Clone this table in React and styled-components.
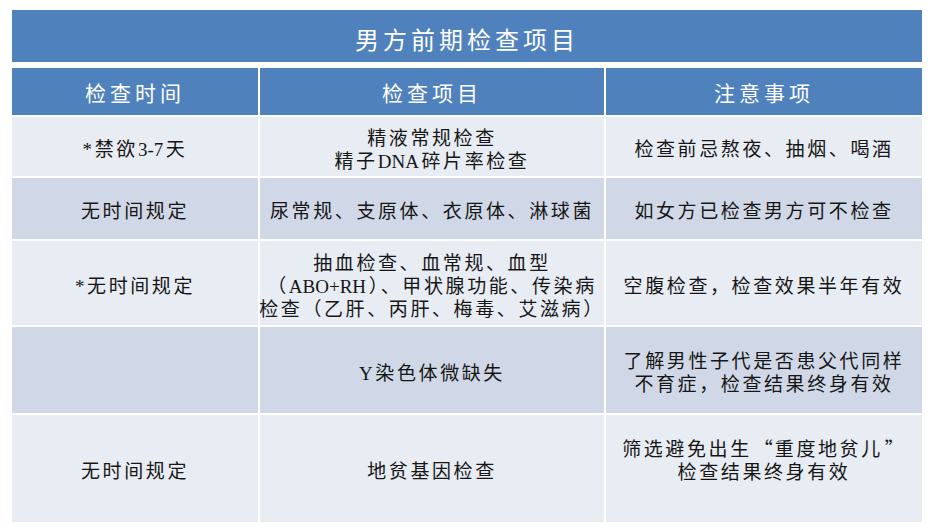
import React from "react";
import styled, { createGlobalStyle } from "styled-components";

const GlobalStyle = createGlobalStyle`
  html, body {
    margin: 0;
    padding: 0;
    background: #ffffff;
  }
  body {
    font-family: "Liberation Serif", "Noto Sans CJK SC", serif;
  }
`;

const Page = styled.div`
  width: 935px;
  height: 525px;
  padding: 10px 13px 0 12px;
  box-sizing: border-box;
  overflow: hidden;
`;

const Grid = styled.div`
  display: grid;
  grid-template-columns: 246px 344px 316px;
  grid-template-rows: 54px 49px 59px 61px 84px 86px 107px;
  column-gap: 2px;
  row-gap: 2px;
  background: #ffffff;
`;

const Title = styled.div`
  grid-column: 1 / -1;
  background: #4f81bd;
  color: #ffffff;
  font-size: 24px;
  letter-spacing: 4px;
  display: flex;
  align-items: center;
  justify-content: center;
  padding-top: 4px;
  margin-bottom: 2px;
`;

const Head = styled.div`
  background: #4f81bd;
  color: #ffffff;
  font-size: 21px;
  letter-spacing: 4px;
  display: flex;
  align-items: center;
  justify-content: center;
  margin-top: 2px;
`;

const Cell = styled.div`
  background: ${(p) => (p.$dark ? "#d0d8e7" : "#e8ecf3")};
  color: #161616;
  font-size: 19px;
  line-height: 23px;
  letter-spacing: 2.6px;
  display: flex;
  align-items: center;
  justify-content: center;
  text-align: center;
  white-space: nowrap;
  padding-top: 6px;
  padding-bottom: ${(p) => p.$lift || 0}px;
`;

const Latin = styled.span`
  letter-spacing: 0;
  margin-right: 2.6px;
`;

const Quote = styled.span`
  font-family: "Noto Sans CJK SC", sans-serif;
  letter-spacing: 0;
  margin: 0 2px;
`;

const rows = [
  {
    time: ["*禁欲3-7天"],
    item: ["精液常规检查", "精子DNA碎片率检查"],
    note: ["检查前忌熬夜、抽烟、喝酒"],
  },
  {
    time: ["无时间规定"],
    item: ["尿常规、支原体、衣原体、淋球菌"],
    note: ["如女方已检查男方可不检查"],
  },
  {
    time: ["*无时间规定"],
    item: [
      "抽血检查、血常规、血型",
      "（ABO+RH）、甲状腺功能、传染病",
      "检查（乙肝、丙肝、梅毒、艾滋病）",
    ],
    note: ["空腹检查，检查效果半年有效"],
  },
  {
    time: [],
    item: ["Y染色体微缺失"],
    note: ["了解男性子代是否患父代同样", "不育症，检查结果终身有效"],
  },
  {
    time: ["无时间规定"],
    item: ["地贫基因检查"],
    note: ["筛选避免出生“重度地贫儿”", "检查结果终身有效"],
    lift: 24,
  },
];

const Text = ({ line }) =>
  line.split(/([A-Za-z0-9+\-]+|[“”])/).map((part, i) => {
    if (!part) return null;
    if (part === "“" || part === "”") return <Quote key={i}>{part}</Quote>;
    if (/^[A-Za-z0-9+\-]+$/.test(part)) return <Latin key={i}>{part}</Latin>;
    return <React.Fragment key={i}>{part}</React.Fragment>;
  });

const Lines = ({ lines }) => (
  <span>
    {lines.map((l, i) => (
      <React.Fragment key={i}>
        {i > 0 && <br />}
        <Text line={l} />
      </React.Fragment>
    ))}
  </span>
);

export default function App() {
  return (
    <Page>
      <GlobalStyle />
      <Grid>
        <Title>男方前期检查项目</Title>
        <Head>检查时间</Head>
        <Head>检查项目</Head>
        <Head>注意事项</Head>
        {rows.map((r, i) => {
          const dark = i % 2 === 1;
          return (
            <React.Fragment key={i}>
              <Cell $dark={dark}>
                <Lines lines={r.time} />
              </Cell>
              <Cell $dark={dark}>
                <Lines lines={r.item} />
              </Cell>
              <Cell $dark={dark} $lift={r.lift}>
                <Lines lines={r.note} />
              </Cell>
            </React.Fragment>
          );
        })}
      </Grid>
    </Page>
  );
}
